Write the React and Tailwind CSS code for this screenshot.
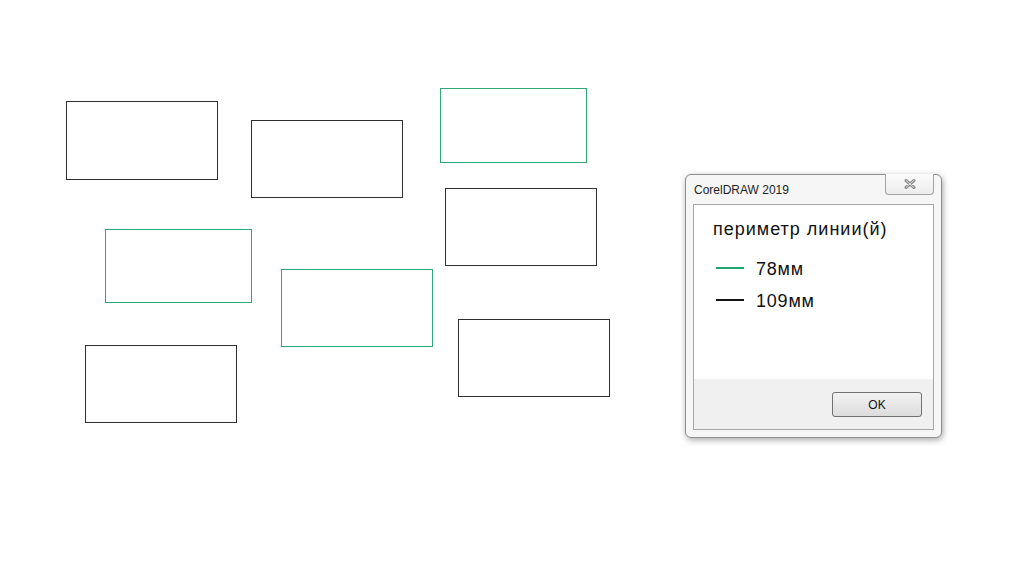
const rects = [
  { x: 66, y: 101, w: 152, h: 79, c: 'black' },
  { x: 251, y: 120, w: 152, h: 78, c: 'black' },
  { x: 440, y: 88, w: 147, h: 75, c: 'green' },
  { x: 445, y: 188, w: 152, h: 78, c: 'black' },
  { x: 105, y: 229, w: 147, h: 74, c: 'green' },
  { x: 281, y: 269, w: 152, h: 78, c: 'green' },
  { x: 458, y: 319, w: 152, h: 78, c: 'black' },
  { x: 85, y: 345, w: 152, h: 78, c: 'black' },
];

function CloseGlyph() {
  return (
    <svg width="12" height="10" viewBox="0 0 12 10">
      <path d="M2 1.5 L10 8.5 M10 1.5 L2 8.5" stroke="#8a8a8a" strokeWidth="3" strokeLinecap="round" />
      <path d="M2 1.5 L10 8.5 M10 1.5 L2 8.5" stroke="#e0e0e0" strokeWidth="1" strokeLinecap="round" />
    </svg>
  );
}

function Dialog() {
  return (
    <div className="absolute left-[685px] top-[174px] w-[257px] h-[264px] rounded-[6px] border border-[#8e8e8e] bg-[#f6f6f6] shadow-[1px_2px_6px_rgba(0,0,0,0.35)] flex flex-col px-[7px] pb-[7px]">
      <div className="h-[29px] flex items-start justify-between">
        <span className="pt-[9px] pl-[1px] text-[12px] leading-none text-[#1e1e1e] font-['Liberation_Sans',sans-serif]">
          CorelDRAW 2019
        </span>
        <div className="mt-[-1px] w-[49px] h-[21px] border border-[#a3a3a3] border-t-0 rounded-b-[4px] bg-gradient-to-b from-[#fbfbfb] to-[#ececec] flex items-center justify-center">
          <CloseGlyph />
        </div>
      </div>
      <div className="flex-1 border border-[#a6a6a6] flex flex-col font-['Liberation_Sans',sans-serif]">
        <div className="bg-white h-[174px] pt-[15px] pl-[19px] flex flex-col text-[18px] leading-[18px] text-[#111]">
          <div className="tracking-[1px]">периметр линии(й)</div>
          <div className="mt-[22px] flex items-center">
            <span className="ml-[3px] w-[28px] h-[2px] bg-[#1fa46c] mt-[-2px]" />
            <span className="ml-[12px] tracking-[0.8px]">78мм</span>
          </div>
          <div className="mt-[14px] flex items-center">
            <span className="ml-[3px] w-[28px] h-[2px] bg-[#151515] mt-[-2px]" />
            <span className="ml-[12px] tracking-[0.8px]">109мм</span>
          </div>
        </div>
        <div className="flex-1 bg-[#f0f0f0] flex justify-end items-start pt-[13px] pr-[11px]">
          <button className="w-[90px] h-[25px] rounded-[3px] border border-[#707070] bg-gradient-to-b from-[#f3f3f3] to-[#dcdcdc] text-[12px] text-[#111] leading-none">
            OK
          </button>
        </div>
      </div>
    </div>
  );
}

export default function App() {
  return (
    <div className="relative w-[1022px] h-[572px] bg-white overflow-hidden">
      {rects.map((r, i) => (
        <div
          key={i}
          className={
            r.c === 'green'
              ? 'absolute border border-[#2ea676]'
              : 'absolute border border-[#2e2e2e]'
          }
          style={{ left: r.x, top: r.y, width: r.w, height: r.h }}
        />
      ))}
      <Dialog />
    </div>
  );
}
